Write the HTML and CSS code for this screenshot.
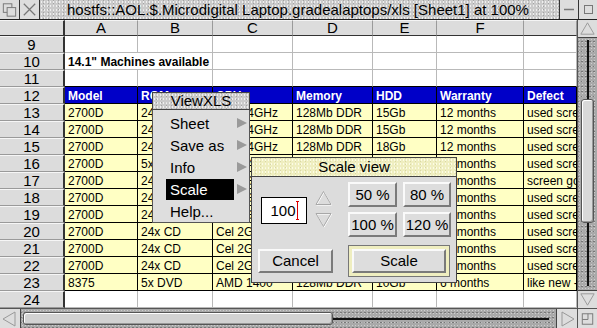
FILE: index.html
```html
<!DOCTYPE html>
<html>
<head>
<meta charset="utf-8">
<title>ViewXLS</title>
<link rel="stylesheet" href="styles.css">
</head>
<body>
<div class="window">
  <div class="titlebar">
    <div class="tbtn"><svg width="20" height="19" viewBox="0 0 20 19"><rect x="3.5" y="3.5" width="9" height="9" fill="none" stroke="#777"/><rect x="7.5" y="7.5" width="9" height="9" fill="#ddd" stroke="#777"/></svg></div>
    <div class="tbtn"><svg width="20" height="19" viewBox="0 0 20 19"><path d="M4 3.5 L16 15.5 M16 3.5 L4 15.5" stroke="#777" stroke-width="1.3" fill="none"/></svg></div>
    <div class="title tex">hostfs::AOL.$.Microdigital Laptop.gradealaptops/xls [Sheet1] at 100%</div>
    <div class="tbtn lb"><svg width="18" height="19" viewBox="0 0 18 19"><path d="M4 9.5 H14" stroke="#777" stroke-width="1.5"/></svg></div>
    <div class="tbtn lb"><svg width="18" height="19" viewBox="0 0 18 19"><rect x="5.5" y="5.5" width="8" height="8" fill="none" stroke="#777"/></svg></div>
  </div>

  <div class="middle">
    <div class="sheet">
      <div class="ch corner"></div><div class="ch">A</div><div class="ch">B</div><div class="ch">C</div><div class="ch">D</div><div class="ch">E</div><div class="ch">F</div><div class="ch"></div>

      <div class="rh">9</div><div class="c"></div><div class="c"></div><div class="c"></div><div class="c"></div><div class="c"></div><div class="c"></div><div class="c"></div>
      <div class="rh">10</div><div class="c bold span2">14.1" Machines available</div><div class="c"></div><div class="c"></div><div class="c"></div><div class="c"></div><div class="c"></div>
      <div class="rh">11</div><div class="c kb"></div><div class="c kb"></div><div class="c kb"></div><div class="c kb"></div><div class="c kb"></div><div class="c kb"></div><div class="c kb"></div>
      <div class="rh">12</div><div class="c b">Model</div><div class="c b">ROM</div><div class="c b">CPU</div><div class="c b">Memory</div><div class="c b">HDD</div><div class="c b">Warranty</div><div class="c b">Defect</div>
      <div class="rh">13</div><div class="c y">2700D</div><div class="c y">24x CD</div><div class="c y">Cel 2.4GHz</div><div class="c y">128Mb DDR</div><div class="c y">15Gb</div><div class="c y">12 months</div><div class="c y">used screen</div>
      <div class="rh">14</div><div class="c y">2700D</div><div class="c y">24x CD</div><div class="c y">Cel 2.4GHz</div><div class="c y">128Mb DDR</div><div class="c y">15Gb</div><div class="c y">12 months</div><div class="c y">used screen</div>
      <div class="rh">15</div><div class="c y">2700D</div><div class="c y">24x CD</div><div class="c y">Cel 2.4GHz</div><div class="c y">128Mb DDR</div><div class="c y">18Gb</div><div class="c y">12 months</div><div class="c y">used screen</div>
      <div class="rh">16</div><div class="c y">2700D</div><div class="c y">5x DVD</div><div class="c y">Cel 2.4GHz</div><div class="c y">128Mb DDR</div><div class="c y">15Gb</div><div class="c y">12 months</div><div class="c y">used screen</div>
      <div class="rh">17</div><div class="c y">2700D</div><div class="c y">24x CD</div><div class="c y">Cel 2GHz</div><div class="c y">128Mb DDR</div><div class="c y">15Gb</div><div class="c y">12 months</div><div class="c y">screen good</div>
      <div class="rh">18</div><div class="c y">2700D</div><div class="c y">24x CD</div><div class="c y">Cel 2GHz</div><div class="c y">128Mb DDR</div><div class="c y">15Gb</div><div class="c y">12 months</div><div class="c y">used screen</div>
      <div class="rh">19</div><div class="c y">2700D</div><div class="c y">24x CD</div><div class="c y">Cel 2GHz</div><div class="c y">128Mb DDR</div><div class="c y">15Gb</div><div class="c y">12 months</div><div class="c y">used screen</div>
      <div class="rh">20</div><div class="c y">2700D</div><div class="c y">24x CD</div><div class="c y">Cel 2GHz</div><div class="c y">128Mb DDR</div><div class="c y">15Gb</div><div class="c y">12 months</div><div class="c y">used screen</div>
      <div class="rh">21</div><div class="c y">2700D</div><div class="c y">24x CD</div><div class="c y">Cel 2GHz</div><div class="c y">128Mb DDR</div><div class="c y">15Gb</div><div class="c y">12 months</div><div class="c y">used screen</div>
      <div class="rh">22</div><div class="c y">2700D</div><div class="c y">24x CD</div><div class="c y">Cel 2GHz</div><div class="c y">128Mb DDR</div><div class="c y">15Gb</div><div class="c y">12 months</div><div class="c y">used screen</div>
      <div class="rh">23</div><div class="c y">8375</div><div class="c y">5x DVD</div><div class="c y">AMD 1400</div><div class="c y">128Mb DDR</div><div class="c y">10Gb</div><div class="c y">6 months</div><div class="c y">like new - box</div>
      <div class="rh">24</div><div class="c"></div><div class="c"></div><div class="c"></div><div class="c"></div><div class="c"></div><div class="c"></div><div class="c"></div>
    </div>

    <div class="vscroll">
      <div class="sbtn"><svg width="20" height="17" viewBox="0 0 20 17"><path d="M10 2.5 L17 14.5 H3 Z" fill="none" stroke="#999"/></svg></div>
      <div class="vwell tex-dark"><div class="vslider"></div></div>
      <div class="sbtn"><svg width="20" height="17" viewBox="0 0 20 17"><path d="M10 14.5 L17 2.5 H3 Z" fill="none" stroke="#999"/></svg></div>
    </div>
  </div>

  <div class="hscroll">
    <div class="sbtn hb"><svg width="20" height="20" viewBox="0 0 20 20"><path d="M3 10 L15 3 V17 Z" fill="none" stroke="#999"/></svg></div>
    <div class="hwell tex-dark"><div class="hslider"></div></div>
    <div class="sbtn hb"><svg width="20" height="20" viewBox="0 0 20 20"><path d="M17 10 L5 3 V17 Z" fill="none" stroke="#999"/></svg></div>
    <div class="sbtn hb rz"><svg width="20" height="20" viewBox="0 0 20 20"><rect x="4.5" y="4.5" width="11" height="11" fill="none" stroke="#777"/><path d="M4.5 10.5 H10.5 V4.5" fill="none" stroke="#777"/></svg></div>
  </div>

  <div class="menu">
    <div class="mtitle tex">ViewXLS</div>
    <div class="mbody">
      <div class="mitem"><span class="mlbl">Sheet</span><span class="marr"></span></div>
      <div class="mitem"><span class="mlbl">Save as</span><span class="marr"></span></div>
      <div class="mitem"><span class="mlbl">Info</span><span class="marr"></span></div>
      <div class="mitem"><span class="mlbl sel">Scale</span><span class="marr"></span></div>
      <div class="mitem"><span class="mlbl">Help...</span></div>
    </div>
  </div>

  <div class="dialog">
    <div class="dtitle tex-cream">Scale view</div>
    <div class="dbody">
      <div class="drow1">
        <div class="dleft">
          <div class="field"><span>100</span><span class="caret"></span></div>
          <div class="adj">
            <svg width="17" height="16" viewBox="0 0 17 16"><path d="M8.5 1.5 L16 14.5 H1 Z" fill="none" stroke="#fff" transform="translate(0.6 0.6)"/><path d="M8.5 1.5 L16 14.5 H1 Z" fill="none" stroke="#a8a8a8"/></svg>
            <svg width="17" height="16" viewBox="0 0 17 16"><path d="M8.5 14.5 L16 1.5 H1 Z" fill="none" stroke="#fff" transform="translate(0.6 0.6)"/><path d="M8.5 14.5 L16 1.5 H1 Z" fill="none" stroke="#a8a8a8"/></svg>
          </div>
        </div>
        <div class="pgrid">
          <div class="btn">50 %</div>
          <div class="btn">80 %</div>
          <div class="btn">100 %</div>
          <div class="btn">120 %</div>
        </div>
      </div>
      <div class="drow2">
        <div class="btn cancel">Cancel</div>
        <div class="defbtn"><div class="btn">Scale</div></div>
      </div>
    </div>
  </div>
</div>
</body>
</html>
```

FILE: styles.css
```css
* { box-sizing: border-box; }
html, body { margin: 0; padding: 0; background: #fff; }
body { font-family: "Liberation Sans", Arial, Helvetica, sans-serif; color: #000; }

.window {
  position: relative;
  width: 597px;
  height: 328px;
  overflow: hidden;
  display: flex;
  flex-direction: column;
}

.tex {
  background-color: #cacaca;
  background-image:
    radial-gradient(circle, rgba(255,255,255,.7) 0.55px, transparent 0.9px),
    radial-gradient(circle, rgba(90,90,90,.35) 0.55px, transparent 0.9px);
  background-size: 3px 4px, 5px 3px;
  background-position: 0 0, 1px 2px;
}
.tex-dark {
  background-color: #a9a9a9;
  background-image:
    radial-gradient(circle, rgba(230,230,230,.6) 0.55px, transparent 0.9px),
    radial-gradient(circle, rgba(60,60,60,.45) 0.55px, transparent 0.9px);
  background-size: 3px 3px, 4px 5px;
  background-position: 0 0, 2px 1px;
}
.tex-cream {
  background-color: #efeec0;
  background-image:
    radial-gradient(circle, rgba(255,255,240,.8) 0.55px, transparent 0.9px),
    radial-gradient(circle, rgba(170,170,110,.35) 0.55px, transparent 0.9px);
  background-size: 3px 4px, 5px 3px;
  background-position: 0 0, 1px 2px;
}

/* title bar */
.titlebar {
  height: 20px;
  display: flex;
  border-bottom: 1px solid #222;
  flex: none;
}
.tbtn {
  width: 20px;
  height: 19px;
  background: #dddddd;
  border-right: 1px solid #333;
  display: flex;
  align-items: center;
  justify-content: center;
  flex: none;
}
.tbtn.lb { border-right: none; border-left: 1px solid #333; width: 19px; }
.title {
  flex: 1;
  font-size: 15px;
  line-height: 19px;
  padding-left: 27px;
  white-space: nowrap;
  overflow: hidden;
}

/* middle */
.middle { display: flex; height: 288px; flex: none; }
.sheet {
  width: 577px;
  display: grid;
  grid-template-columns: 65px 73px 75px 80px 80px 64px 87px 53px;
  grid-template-rows: 16px repeat(16, 17px);
  overflow: hidden;
}
.ch {
  background: #dcdcdc;
  border-right: 1px solid #9a9a9a;
  border-bottom: 1px solid #333;
  border-top: 1px solid #f4f4f4;
  font-size: 15px;
  line-height: 14px;
  text-align: center;
}
.ch.corner, .rh { border-right: 2px solid #333; }
.rh {
  background: #dcdcdc;
  border-top: 1px solid #f6f6f6;
  border-bottom: 1px solid #9a9a9a;
  font-size: 15px;
  line-height: 15px;
  text-align: center;
}
.c {
  border-right: 1px solid #b9b9b9;
  border-bottom: 1px solid #b9b9b9;
  font-size: 12px;
  line-height: 15px;
  padding-top: 2px;
  padding-left: 3px;
  white-space: nowrap;
  overflow: hidden;
}
.c.bold { font-weight: bold; overflow: visible; }
.c.span2 { grid-column: span 2; }
.c.kb { border-bottom-color: #000; }
.c.b {
  background: #0000c8;
  color: #fff;
  font-weight: bold;
  border-color: #000;
}
.c.y { background: #ffffc4; border-color: #000; }

/* vertical scrollbar */
.vscroll {
  width: 20px;
  display: flex;
  flex-direction: column;
  border-left: 1px solid #555;
}
.sbtn {
  height: 17px;
  background: #dddddd;
  display: flex;
  align-items: center;
  justify-content: center;
  flex: none;
}
.vwell {
  flex: 1;
  border-top: 1px solid #444;
  border-bottom: 1px solid #444;
  display: flex;
  flex-direction: column;
  align-items: center;
}
.vwell::before {
  content: "";
  display: block;
  width: 2px;
  height: 246px;
  margin-top: 2px;
  background: #111;
}
.vslider {
  width: 13px;
  height: 124px;
  margin-top: -187px;
  border-radius: 3px;
  background: #d9d9d9;
  border: 1px solid #555;
  box-shadow: inset 1px 1px 0 #fff, inset -1px -1px 0 #999;
}

/* horizontal scrollbar */
.hscroll {
  height: 20px;
  display: flex;
  border-top: 1px solid #555;
  flex: none;
}
.sbtn.hb { width: 20px; height: 19px; }
.sbtn.rz { border-left: 1px solid #555; }
.hwell {
  flex: 1;
  border-left: 1px solid #444;
  border-right: 1px solid #444;
  display: flex;
  align-items: center;
}
.hwell::before {
  content: "";
  display: block;
  height: 2px;
  width: 520px;
  margin-left: 8px;
  background: #111;
}
.hslider {
  height: 13px;
  width: 310px;
  margin-left: -526px;
  border-radius: 3px;
  background: #d2d2d2;
  border: 1px solid #555;
  box-shadow: inset 1px 1px 0 #fff, inset -1px -1px 0 #999;
}

/* menu */
.menu {
  position: absolute;
  left: 152px;
  top: 92px;
  width: 98px;
}
.mtitle {
  height: 18px;
  border: 1px solid #444;
  font-size: 15px;
  line-height: 16px;
  text-align: center;
}
.mbody {
  height: 113px;
  background: #dedede;
  border: 1px solid #555;
  border-top: none;
  padding-top: 2px;
}
.mitem {
  height: 22px;
  display: flex;
  align-items: center;
  font-size: 15px;
}
.mlbl {
  margin-left: 13px;
  width: 68px;
  height: 21px;
  line-height: 21px;
  padding-left: 4px;
}
.mlbl.sel { background: #000; color: #fff; }
.marr {
  margin-left: 3px;
  width: 0;
  height: 0;
  border-top: 5px solid transparent;
  border-bottom: 5px solid transparent;
  border-left: 10px solid #9a9a9a;
}

/* dialog */
.dialog {
  position: absolute;
  left: 251px;
  top: 157px;
  width: 206px;
  height: 126px;
  display: flex;
  flex-direction: column;
}
.dtitle {
  height: 20px;
  border: 1px solid #444;
  font-size: 15px;
  line-height: 18px;
  text-align: center;
}
.dbody {
  flex: 1;
  background: #dcdcdc;
  border: 1px solid #444;
  border-top: none;
  padding-top: 5px;
}
.drow1 { display: flex; height: 55px; }
.dleft { width: 96px; display: flex; }
.field {
  margin-left: 9px;
  margin-top: 15px;
  width: 46px;
  height: 27px;
  background: #fff;
  border: 1px solid #000;
  font-size: 15px;
  display: flex;
  align-items: center;
  justify-content: center;
  padding-left: 1px;
}
.caret {
  display: inline-block;
  width: 3px;
  height: 19px;
  border-top: 1px solid #d00;
  border-bottom: 1px solid #d00;
  background: linear-gradient(to right, transparent 1px, #d00 1px, #d00 2px, transparent 2px);
}
.adj {
  margin-left: 8px;
  margin-top: 8px;
  display: flex;
  flex-direction: column;
  gap: 6px;
}
.pgrid {
  display: grid;
  grid-template-columns: 49px 48px;
  grid-template-rows: 25px 25px;
  column-gap: 6px;
  row-gap: 5px;
}
.btn {
  background: #dddddd;
  border: 2px solid;
  border-color: #fafafa #7a7a7a #7a7a7a #fafafa;
  font-size: 15px;
  text-align: center;
  line-height: 21px;
  white-space: nowrap;
}
.drow2 { display: flex; margin-top: 8px; }
.btn.cancel {
  margin-left: 6px;
  margin-top: 4px;
  width: 75px;
  height: 24px;
  line-height: 20px;
}
.defbtn {
  margin-left: 15px;
  width: 102px;
  height: 32px;
  padding: 3px;
  background: #efeec0;
  border: 1px solid #777;
}
.defbtn .btn { height: 24px; line-height: 20px; }
```
